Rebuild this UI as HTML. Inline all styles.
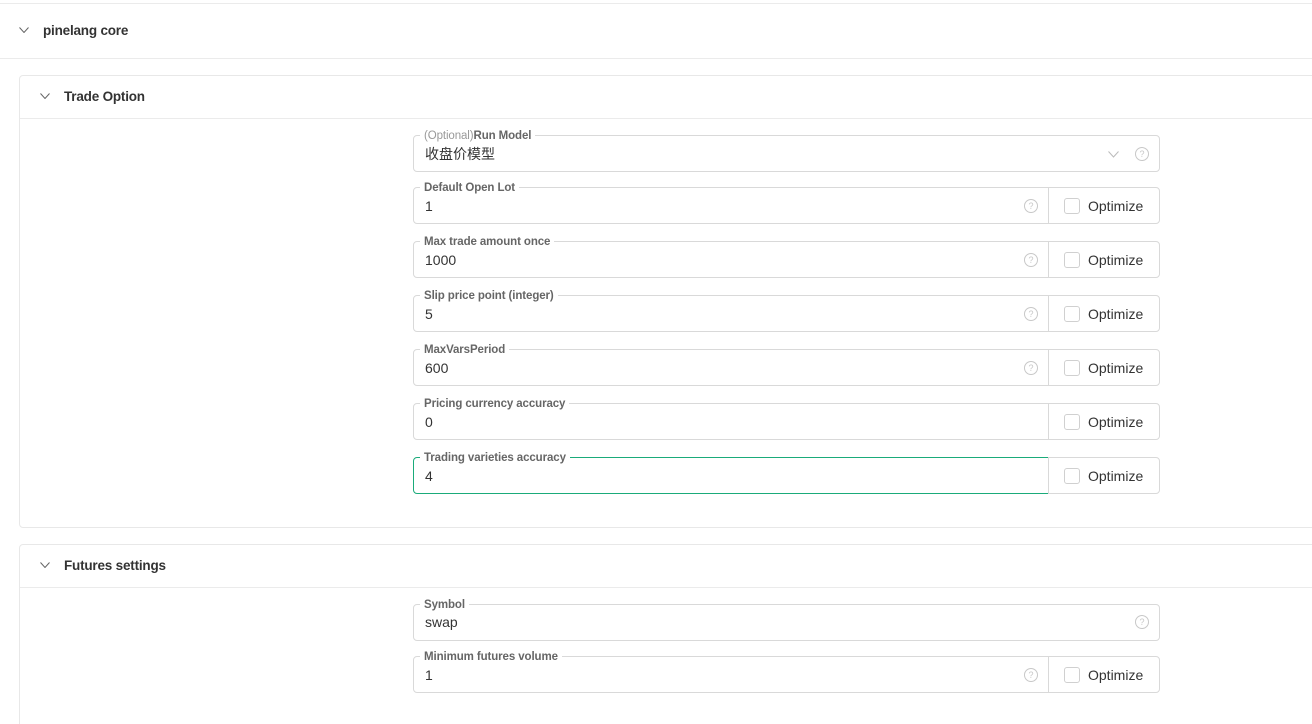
<!DOCTYPE html>
<html><head><meta charset="utf-8"><style>
*{box-sizing:border-box;margin:0;padding:0}
html,body{width:1312px;height:724px;overflow:hidden}
body{background:#fff;font-family:"Liberation Sans","Noto Sans CJK SC",sans-serif;color:#333;position:relative}
.a{position:absolute}
.hl{position:absolute;left:0;right:0;height:1px;background:#ebebeb}
.chev{position:absolute;width:10px;height:6px}
.title{position:absolute;font-size:13.5px;font-weight:bold;color:#333;letter-spacing:-0.2px}
.card{position:absolute;left:19px;right:-5px;border:1px solid #e8e8e8;border-radius:4px}
.f{position:absolute;left:413px;height:37px;border:1px solid #d9d9d9;border-radius:4px}
.f.w{width:747px}
.f.n{width:636px;border-radius:4px 0 0 4px}
.f.g{border-color:#1aab7a}
.lab{position:absolute;left:6px;top:-7px;background:#fff;padding:0 4px;font-size:11.5px;font-weight:bold;color:#666;line-height:14px;white-space:nowrap;letter-spacing:-0.1px}
.lab i{font-style:normal;font-weight:normal;color:#999}
.val{position:absolute;left:11px;top:10px;font-size:14px;color:#333;line-height:16px}
.q{position:absolute;top:11px;width:14px;height:14px;border:1px solid #c8c8c8;border-radius:50%;font-size:9px;color:#c8c8c8;text-align:center;line-height:12px}
.opt{position:absolute;left:1048px;width:112px;height:37px;border:1px solid #d9d9d9;border-radius:0 4px 4px 0}
.cb{position:absolute;left:15px;top:10px;width:16px;height:16px;border:1px solid #d0d0d0;border-radius:3px}
.ot{position:absolute;left:39px;top:10px;font-size:14px;color:#333}
</style></head><body>
<div class="hl" style="top:3px"></div>
<svg class="chev" style="left:19px;top:27px" viewBox="0 0 10 6"><path d="M0.5 0.5L5 5.5L9.5 0.5" fill="none" stroke="#666" stroke-width="1"/></svg>
<div class="title" style="left:43px;top:23px">pinelang core</div>
<div class="hl" style="top:58px"></div>

<div class="card" style="top:75px;height:453px"></div>
<div class="a" style="left:20px;right:0;top:118px;height:1px;background:#ebebeb"></div>
<svg class="chev" style="left:40px;top:93px" viewBox="0 0 10 6"><path d="M0.5 0.5L5 5.5L9.5 0.5" fill="none" stroke="#666" stroke-width="1"/></svg>
<div class="title" style="left:64px;top:89px">Trade Option</div>

<div class="card" style="top:544px;height:200px"></div>
<div class="a" style="left:20px;right:0;top:587px;height:1px;background:#ebebeb"></div>
<svg class="chev" style="left:40px;top:562px" viewBox="0 0 10 6"><path d="M0.5 0.5L5 5.5L9.5 0.5" fill="none" stroke="#666" stroke-width="1"/></svg>
<div class="title" style="left:64px;top:558px">Futures settings</div>

<div class="f w" style="top:135px"><div class="lab"><i>(Optional)</i>Run Model</div><div class="val">收盘价模型</div>
<svg class="a" style="left:694px;top:15px" width="11" height="7" viewBox="0 0 11 7"><path d="M0.5 0.5L5.5 6L10.5 0.5" fill="none" stroke="#bbb"/></svg><div class="q" style="left:721px">?</div></div>

<div class="f n" style="top:187px"><div class="lab">Default Open Lot</div><div class="val">1</div><div class="q" style="left:610px">?</div></div>
<div class="opt" style="top:187px"><div class="cb"></div><div class="ot">Optimize</div></div>

<div class="f n" style="top:241px"><div class="lab">Max trade amount once</div><div class="val">1000</div><div class="q" style="left:610px">?</div></div>
<div class="opt" style="top:241px"><div class="cb"></div><div class="ot">Optimize</div></div>

<div class="f n" style="top:295px"><div class="lab">Slip price point (integer)</div><div class="val">5</div><div class="q" style="left:610px">?</div></div>
<div class="opt" style="top:295px"><div class="cb"></div><div class="ot">Optimize</div></div>

<div class="f n" style="top:349px"><div class="lab">MaxVarsPeriod</div><div class="val">600</div><div class="q" style="left:610px">?</div></div>
<div class="opt" style="top:349px"><div class="cb"></div><div class="ot">Optimize</div></div>

<div class="f n" style="top:403px"><div class="lab">Pricing currency accuracy</div><div class="val">0</div></div>
<div class="opt" style="top:403px"><div class="cb"></div><div class="ot">Optimize</div></div>

<div class="f n g" style="top:457px"><div class="lab">Trading varieties accuracy</div><div class="val">4</div></div>
<div class="opt" style="top:457px"><div class="cb"></div><div class="ot">Optimize</div></div>

<div class="f w" style="top:604px"><div class="lab">Symbol</div><div class="val" style="top:9px">swap</div><div class="q" style="left:721px;top:10px">?</div></div>

<div class="f n" style="top:656px"><div class="lab">Minimum futures volume</div><div class="val">1</div><div class="q" style="left:610px">?</div></div>
<div class="opt" style="top:656px"><div class="cb"></div><div class="ot">Optimize</div></div>
</body></html>
